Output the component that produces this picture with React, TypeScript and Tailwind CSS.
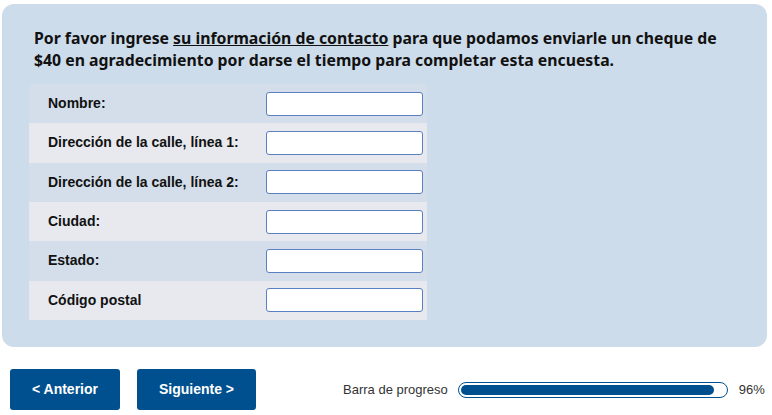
import React from "react";

const fields = [
  "Nombre:",
  "Dirección de la calle, línea 1:",
  "Dirección de la calle, línea 2:",
  "Ciudad:",
  "Estado:",
  "Código postal",
];

export default function App() {
  const progress = 96;

  return (
    <div className="w-[772px] h-[415px] bg-white font-['Liberation_Sans',Arial,sans-serif] overflow-hidden">
      {/* Question panel */}
      <div className="mt-[4px] ml-[2px] w-[765px] h-[343px] rounded-[12px] bg-[#cddcea] px-[27px] pt-[23px]">
        <p className="pl-[5px] font-['Noto_Sans',sans-serif] font-bold text-[15.8px] leading-[22px] text-[#111]">
          Por favor ingrese <span className="underline">su información de contacto</span> para que podamos
          enviarle un cheque de $40 en agradecimiento por darse el tiempo para completar esta encuesta.
        </p>

        <div className="mt-[13px] w-[398px] flex flex-col">
          {fields.map((label, i) => (
            <div
              key={label}
              className={`flex items-center h-[39.33px] ${i % 2 === 0 ? "bg-[#d3deea]" : "bg-[#e7e9ef]"}`}
            >
              <label className="w-[237px] pl-[19px] text-[14px] font-bold text-[#111]">{label}</label>
              <input
                type="text"
                className="w-[157px] h-[24px] rounded-[3px] border border-[#5b80c2] bg-white"
              />
            </div>
          ))}
        </div>
      </div>

      {/* Navigation + progress */}
      <div className="flex items-center mt-[22px] pl-[10px]">
        <button className="w-[110px] h-[41px] rounded-[3px] bg-[#00508f] text-white text-[14px] font-bold">
          &lt; Anterior
        </button>
        <button className="ml-[17px] w-[119px] h-[41px] rounded-[3px] bg-[#00508f] text-white text-[14px] font-bold">
          Siguiente &gt;
        </button>

        <span className="ml-[87px] text-[13px] text-[#333]">Barra de progreso</span>
        <div className="ml-[10px] w-[270px] h-[16px] rounded-full border-[1.5px] border-[#00508f] p-[2px] bg-white">
          <div className="h-full rounded-full bg-[#00508f]" style={{ width: `${progress}%` }} />
        </div>
        <span className="ml-[11px] text-[13px] text-[#333]">{progress}%</span>
      </div>
    </div>
  );
}
